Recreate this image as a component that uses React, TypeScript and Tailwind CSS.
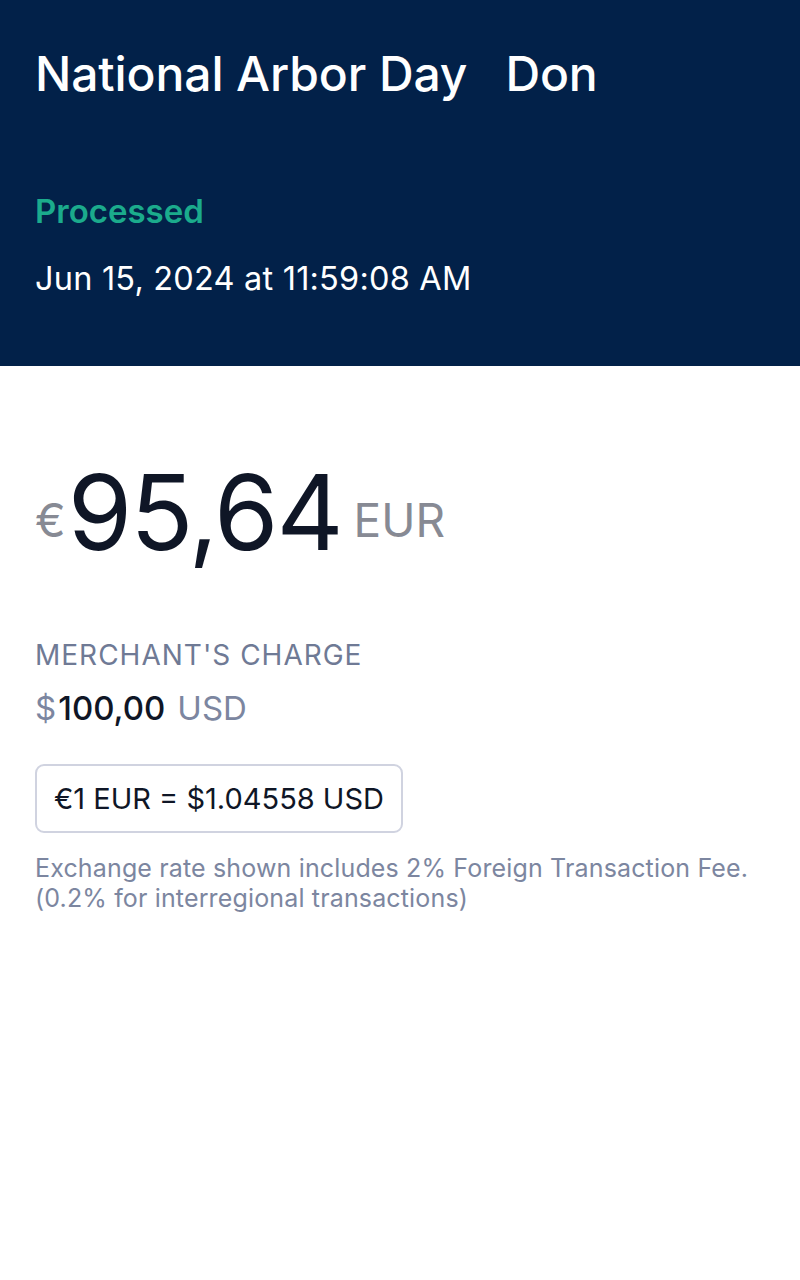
export default function App() {
  const font = { fontFamily: "Inter, 'Noto Sans', sans-serif" };
  return (
    <div className="w-[800px] h-[1280px] bg-white" style={font}>
      <div className="bg-[#022149] h-[366px] px-[35px] pt-[44px]">
        <h1 className="text-white text-[48px] font-medium leading-[60px] tracking-[-0.1px] whitespace-pre">National Arbor Day   Don</h1>
        <div className="mt-[87px] text-[#1bab8c] text-[33px] font-semibold leading-[40px]">Processed</div>
        <div className="mt-[28px] text-white text-[32.5px] leading-[40px] tracking-[0.2px]">Jun 15, 2024 at 11:59:08 AM</div>
      </div>
      <div className="px-[35px] pt-[94px]">
        <div className="flex items-end">
          <span className="text-[#878a94] text-[46px] leading-none mb-[21px]">€</span>
          <span className="text-[#0f1626] text-[104px] leading-none tracking-[-2px] ml-[2px]">95,64</span>
          <span className="text-[#878a94] text-[46px] leading-none ml-[12px] mb-[21px]">EUR</span>
        </div>
        <div className="mt-[74px] text-[#6f7a95] text-[28px] leading-[34px] tracking-[1px]">MERCHANT'S CHARGE</div>
        <div className="mt-[16px] flex items-baseline text-[33px] leading-[40px]">
          <span className="text-[#7c86a0]">$</span>
          <span className="text-[#0f1626] font-medium ml-[2px]">100,00</span>
          <span className="text-[#7c86a0] ml-[12px]">USD</span>
        </div>
        <div className="mt-[36px] inline-flex items-center h-[69px] px-[17px] rounded-[9px] border-2 border-[#d0d3e0] text-[#0f1626] text-[29px]">
          €1 EUR = $1.04558 USD
        </div>
        <div className="mt-[20px] text-[#7c86a0] text-[25px] leading-[30px] tracking-[0.15px]">
          Exchange rate shown includes 2% Foreign Transaction Fee.
          <br />
          (0.2% for interregional transactions)
        </div>
      </div>
    </div>
  );
}
